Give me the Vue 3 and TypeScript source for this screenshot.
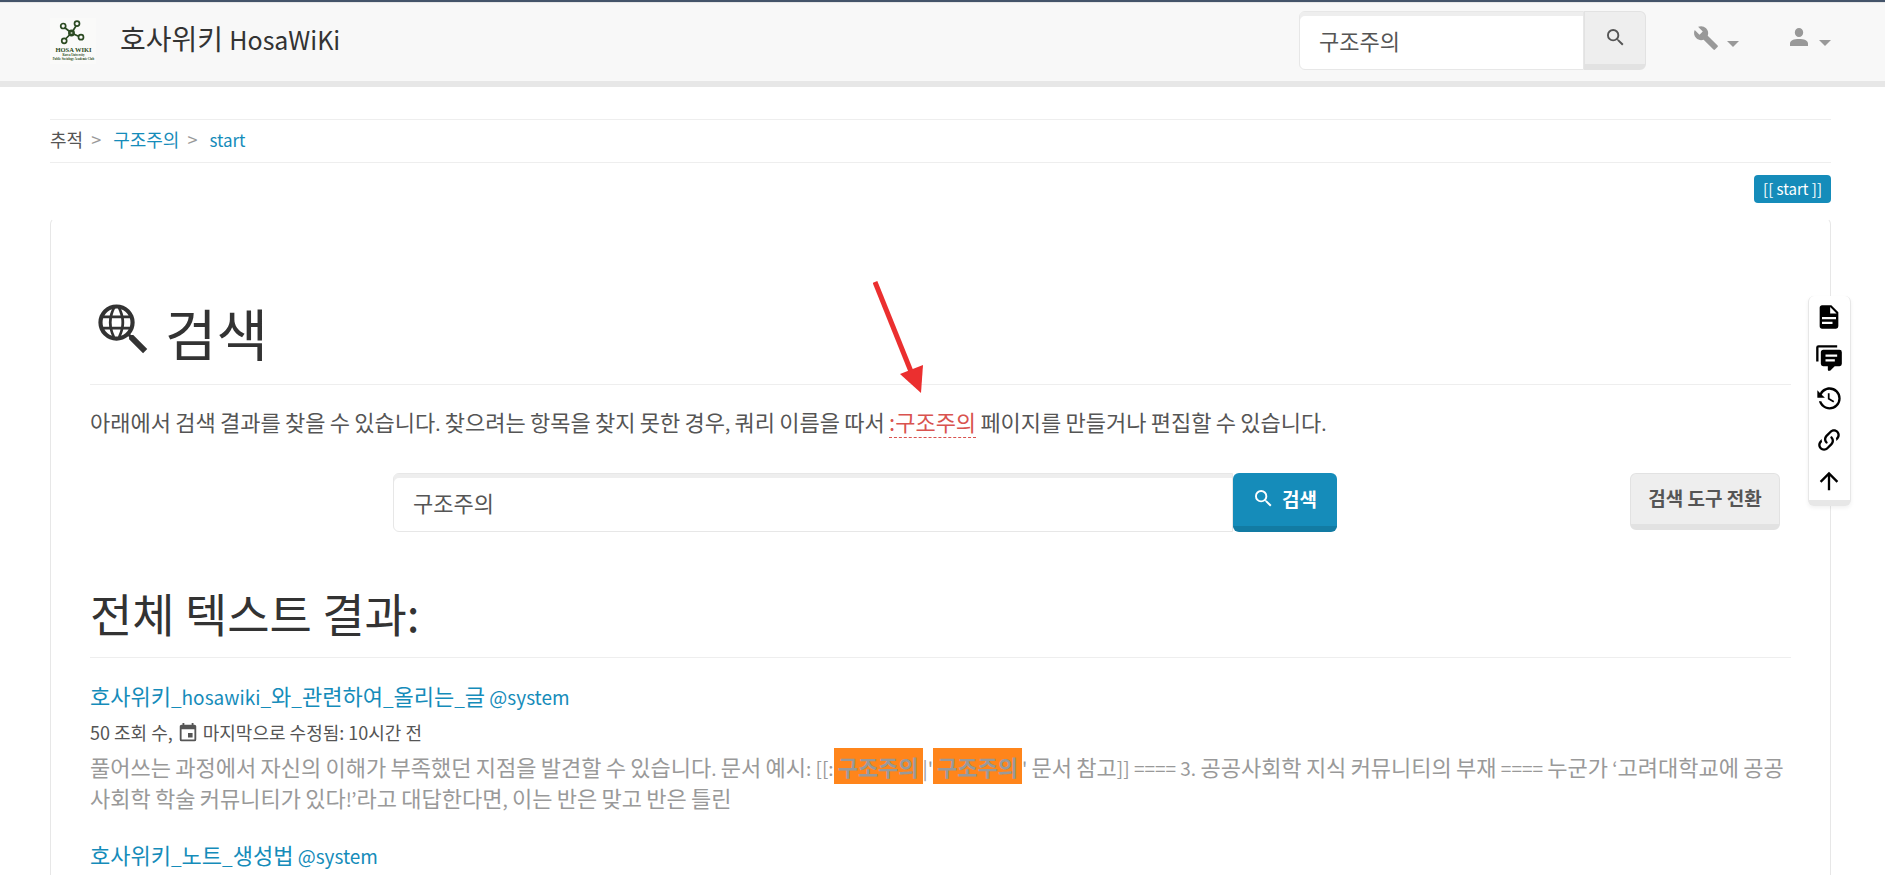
<script setup lang="ts">
import { ref } from 'vue'

interface Run {
  text: string
  latin: boolean
  hit: boolean
}

function split(text: string, hit = false): Run[] {
  return (text.match(/[가-힣]+|[^가-힣]+/g) ?? []).map((part) => ({
    text: part,
    latin: !/[가-힣]/.test(part),
    hit,
  }))
}

/* Matches of the query are wrapped in asterisks. */
function highlight(text: string): Run[] {
  return text.split('*').flatMap((part, i) => split(part, i % 2 === 1))
}

const headerQuery = ref('구조주의')
const pageQuery = ref('구조주의')

const introBefore = split(
  '아래에서 검색 결과를 찾을 수 있습니다. 찾으려는 항목을 찾지 못한 경우, 쿼리 이름을 따서 ',
)
const introAfter = split(' 페이지를 만들거나 편집할 수 있습니다.')

const firstTitle = split('호사위키_hosawiki_와_관련하여_올리는_글 @system')
const secondTitle = split('호사위키_노트_생성법 @system')
const snippet = highlight(
  "풀어쓰는 과정에서 자신의 이해가 부족했던 지점을 발견할 수 있습니다. 문서 예시: [[:*구조주의*|'*구조주의*' 문서 참고]] ==== 3. 공공사회학 지식 커뮤니티의 부재 ==== 누군가 ‘고려대학교에 공공사회학 학술 커뮤니티가 있다!’라고 대답한다면, 이는 반은 맞고 반은 틀린",
)

const magnify =
  'M9.5,3A6.5,6.5 0 0,1 16,9.5C16,11.11 15.41,12.59 14.44,13.73L14.71,14H15.5L20.5,19L19,20.5L14,15.5V14.71L13.73,14.44C12.59,15.41 11.11,16 9.5,16A6.5,6.5 0 0,1 3,9.5A6.5,6.5 0 0,1 9.5,3M9.5,5C7,5 5,7 5,9.5C5,12 7,14 9.5,14C12,14 14,12 14,9.5C14,7 12,5 9.5,5Z'

const pageTools: { label: string; path: string }[] = [
  {
    label: '문서 보기',
    path: 'M13,9H18.5L13,3.5V9M6,2H14L20,8V20A2,2 0 0,1 18,22H6C4.89,22 4,21.1 4,20V4C4,2.89 4.89,2 6,2M15,18V16H6V18H15M18,14V12H6V14H18Z',
  },
  {
    label: '토론',
    path: 'M12,23A1,1 0 0,1 11,22V19H7A2,2 0 0,1 5,17V7C5,5.89 5.9,5 7,5H21A2,2 0 0,1 23,7V17A2,2 0 0,1 21,19H16.9L13.2,22.71C13,22.89 12.76,23 12.5,23H12M3,15H1V3A2,2 0 0,1 3,1H19V3H3V15M9,9V11H19V9H9M9,13V15H17V13H9Z',
  },
  {
    label: '이전 판',
    path: 'M11,7V12.11L15.71,14.9L16.5,13.62L12.5,11.25V7M12.5,2C8.97,2 5.91,3.92 4.27,6.77L2,4.5V11H8.5L5.75,8.25C6.96,5.73 9.5,4 12.5,4A7.5,7.5 0 0,1 20,11.5A7.5,7.5 0 0,1 12.5,19C9.23,19 6.47,16.91 5.44,14H3.34C4.44,18.03 8.11,21 12.5,21C17.74,21 22,16.75 22,11.5A9.5,9.5 0 0,0 12.5,2Z',
  },
  {
    label: '역링크',
    path: 'M10.59,13.41C11,13.8 11,14.44 10.59,14.83C10.2,15.22 9.56,15.22 9.17,14.83C7.22,12.88 7.22,9.71 9.17,7.76V7.76L12.71,4.22C14.66,2.27 17.83,2.27 19.78,4.22C21.73,6.17 21.73,9.34 19.78,11.29L18.29,12.78C18.3,11.96 18.17,11.14 17.89,10.36L18.36,9.88C19.54,8.71 19.54,6.81 18.36,5.64C17.19,4.46 15.29,4.46 14.12,5.64L10.59,9.17C9.41,10.34 9.41,12.24 10.59,13.41M13.41,9.17C13.8,8.78 14.44,8.78 14.83,9.17C16.78,11.12 16.78,14.29 14.83,16.24V16.24L11.29,19.78C9.34,21.73 6.17,21.73 4.22,19.78C2.27,17.83 2.27,14.66 4.22,12.71L5.71,11.22C5.7,12.04 5.83,12.86 6.11,13.65L5.64,14.12C4.46,15.29 4.46,17.19 5.64,18.36C6.81,19.54 8.71,19.54 9.88,18.36L13.41,14.83C14.59,13.66 14.59,11.76 13.41,10.59C13,10.2 13,9.56 13.41,9.17Z',
  },
  {
    label: '맨 위로',
    path: 'M13,20H11V8L5.5,13.5L4.08,12.08L12,4.16L19.92,12.08L18.5,13.5L13,8V20Z',
  },
]
</script>

<template>
  <div class="page">
    <header class="navbar">
      <a class="brand" href="#">
        <svg class="logo" viewBox="0 0 46 46" role="img" aria-label="HOSA WIKI">
          <rect width="46" height="46" fill="#fafaf9" />
          <g fill="none" stroke="#2b4a22" stroke-width="1.7">
            <path d="M14.5 9.5 L21.5 15 L26 8 M21.5 15 L28.5 18.2 M21.5 15 L15.5 21" />
            <circle cx="13.2" cy="8" r="2.5" />
            <circle cx="27" cy="5.6" r="2.5" />
            <circle cx="31" cy="19.2" r="2.5" />
            <circle cx="14.2" cy="22.8" r="2.5" />
            <circle cx="21.5" cy="15" r="2.6" fill="#2b4a22" />
          </g>
          <circle cx="21.5" cy="15" r="1" fill="#b7c4b2" />
          <g fill="#2b4a22" text-anchor="middle" font-family="'Liberation Serif', serif" font-weight="bold">
            <text x="23.5" y="34" font-size="6.5">HOSA WIKI</text>
            <text x="23.5" y="38.4" font-size="3">Korea University</text>
            <text x="23.5" y="41.6" font-size="3">Public Sociology Academic Club</text>
          </g>
        </svg>
        <span class="brand-name">호사위키 <span class="latin">HosaWiKi</span></span>
      </a>

      <div class="nav-right">
        <form class="nav-search" role="search" @submit.prevent>
          <input v-model="headerQuery" class="field" type="text" aria-label="위키 검색" />
          <button class="btn-default nav-search-btn" type="submit" aria-label="검색">
            <svg class="icon-search" viewBox="3 3 18 18"><path :d="magnify" /></svg>
          </button>
        </form>
        <button class="menu" type="button" aria-label="도구">
          <svg class="icon-menu" viewBox="0 0 24 24">
            <path d="M22.7,19L13.6,9.9C14.5,7.6 14,4.9 12.1,3C10.1,1 7.1,0.6 4.7,1.7L9,6L6,9L1.6,4.7C0.4,7.1 0.9,10.1 2.9,12.1C4.8,14 7.5,14.5 9.8,13.6L18.9,22.7C19.3,23.1 19.9,23.1 20.3,22.7L22.6,20.4C23.1,20 23.1,19.3 22.7,19Z" />
          </svg>
          <span class="caret"></span>
        </button>
        <button class="menu menu-user" type="button" aria-label="사용자">
          <svg class="icon-menu" viewBox="0 0 24 24">
            <path d="M12,3A4.2,4.5 0 0,1 16.2,7.5A4.2,4.5 0 0,1 12,12A4.2,4.5 0 0,1 7.8,7.5A4.2,4.5 0 0,1 12,3M12,14C17,14 21,15.4 21,18.6V21H3V18.6C3,15.4 7,14 12,14Z" />
          </svg>
          <span class="caret"></span>
        </button>
      </div>
    </header>

    <main class="content">
      <nav class="trail" aria-label="추적">
        <span>추적</span><span class="sep">&gt;</span>
        <a href="#">구조주의</a><span class="sep">&gt;</span>
        <a class="latin" href="#">start</a>
      </nav>

      <div class="page-id"><span class="badge">[[ start ]]</span></div>

      <article class="panel">
        <h1>
          <svg class="icon-web" viewBox="0 0 24 24">
            <path d="M15.5,14L20.5,19L19,20.5L14,15.5V14.71L13.73,14.43C12.59,15.41 11.11,16 9.5,16A6.5,6.5 0 0,1 3,9.5A6.5,6.5 0 0,1 9.5,3A6.5,6.5 0 0,1 16,9.5C16,11.11 15.41,12.59 14.43,13.73L14.71,14H15.5M9.5,4.5L8.95,4.53C8.71,5.05 8.34,5.93 8.07,7H10.93C10.66,5.93 10.29,5.05 10.05,4.53C9.87,4.5 9.69,4.5 9.5,4.5M13.83,7C13.24,5.97 12.29,5.17 11.15,4.78C11.39,5.31 11.7,6.08 11.93,7H13.83M5.17,7H7.07C7.3,6.08 7.61,5.31 7.85,4.78C6.71,5.17 5.76,5.97 5.17,7M4.5,9.5C4.5,10 4.58,10.53 4.73,11H6.87L6.75,9.5L6.87,8H4.73C4.58,8.47 4.5,9 4.5,9.5M14.27,11C14.42,10.53 14.5,10 14.5,9.5C14.5,9 14.42,8.47 14.27,8H12.13C12.21,8.5 12.25,9 12.25,9.5C12.25,10 12.21,10.5 12.13,11H14.27M7.87,8L7.75,9.5L7.87,11H11.13C11.21,10.5 11.25,10 11.25,9.5C11.25,9 11.21,8.5 11.13,8H7.87M9.5,14.5C9.68,14.5 9.86,14.5 10.03,14.47C10.28,13.95 10.66,13.07 10.93,12H8.07C8.34,13.07 8.72,13.95 8.97,14.47L9.5,14.5M13.83,12H11.93C11.7,12.92 11.39,13.69 11.15,14.22C12.29,13.83 13.24,13.03 13.83,12M5.17,12C5.76,13.03 6.71,13.83 7.85,14.22C7.61,13.69 7.3,12.92 7.07,12H5.17Z" />
          </svg>
          <span>검색</span>
        </h1>

        <p class="intro">
          <span v-for="(run, i) in introBefore" :key="i" :class="{ latin: run.latin }">{{ run.text }}</span>
          <span class="pointed"><a class="missing" href="#">:구조주의</a><svg class="pointer" viewBox="0 0 52 114" aria-hidden="true">
            <path d="M2 2 L39 94" stroke="#eb2f2f" stroke-width="5" fill="none" />
            <path d="M27 94 L50 85 L48 113 Z" fill="#eb2f2f" />
          </svg></span>
          <span v-for="(run, i) in introAfter" :key="i" :class="{ latin: run.latin }">{{ run.text }}</span>
        </p>

        <div class="search-row">
          <form class="main-search" @submit.prevent>
            <input v-model="pageQuery" class="field" type="text" aria-label="검색어" />
            <button class="btn-primary" type="submit">
              <svg class="icon-search" viewBox="3 3 18 18"><path :d="magnify" /></svg>
              <span>검색</span>
            </button>
          </form>
          <div class="toggle-cell">
            <button class="btn-default toggle" type="button">검색 도구 전환</button>
          </div>
        </div>

        <h2>전체 텍스트 결과:</h2>

        <dl class="results">
          <dt>
            <a href="#"><span v-for="(run, i) in firstTitle" :key="i" :class="{ latin: run.latin }">{{ run.text }}</span></a>
          </dt>
          <dd class="meta">
            <span>50 조회 수,</span>
            <svg class="icon-date" viewBox="0 0 24 24">
              <path d="M19,19H5V8H19M16,1V3H8V1H6V3H5C3.89,3 3,3.89 3,5V19A2,2 0 0,0 5,21H19A2,2 0 0,0 21,19V5C21,3.89 20.1,3 19,3H18V1M17,12H12V17H17V12Z" />
            </svg>
            <span>마지막으로 수정됨: 10시간 전</span>
          </dd>
          <dd class="snippet">
            <component
              :is="run.hit ? 'mark' : 'span'"
              v-for="(run, i) in snippet"
              :key="i"
              :class="{ latin: run.latin }"
              >{{ run.text }}</component
            >
          </dd>
          <dt>
            <a href="#"><span v-for="(run, i) in secondTitle" :key="i" :class="{ latin: run.latin }">{{ run.text }}</span></a>
          </dt>
        </dl>
      </article>
    </main>

    <nav class="tools" aria-label="문서 도구">
      <a v-for="tool in pageTools" :key="tool.label" href="#" :aria-label="tool.label">
        <svg viewBox="0 0 24 24"><path :d="tool.path" /></svg>
      </a>
    </nav>
  </div>
</template>

<style>
html,
body {
  margin: 0;
  background: #fff;
}
</style>

<style scoped>
.page,
.page * {
  box-sizing: border-box;
}
.page {
  display: flex;
  flex-direction: column;
  min-height: 100vh;
  font-family: 'Noto Sans CJK KR', sans-serif;
  font-size: 22px;
  line-height: 31px;
  color: #555;
  border-top: 2px solid #44546a;
}
a {
  color: #158cba;
  text-decoration: none;
}
button,
input {
  font-family: inherit;
  margin: 0;
}
svg {
  display: block;
  fill: currentColor;
}
.latin {
  font-size: 19px;
  line-height: 1;
}

/* Header */
.navbar {
  display: flex;
  justify-content: space-between;
  min-height: 85px;
  padding: 0 54px 0 50px;
  background: #f8f8f8;
  border-top: 1px solid #e7e7e7;
  border-bottom: 6px solid #e7e7e7;
}
.brand {
  display: flex;
  align-items: center;
  gap: 24px;
  height: 76px;
}
.logo {
  width: 46px;
  height: 46px;
}
.brand-name {
  padding-bottom: 6px;
  font-size: 28px;
  color: #333;
}
.brand-name .latin {
  font-size: 25px;
}
.nav-right {
  display: flex;
  align-items: flex-start;
  padding-top: 8px;
}
.nav-search {
  display: flex;
  width: 347px;
  margin-right: 47px;
}
.field {
  flex: 1;
  min-width: 0;
  height: 59px;
  padding: 0 19px 1px;
  font-size: 22px;
  color: #555;
  background: #fff;
  border: 1px solid #e7e7e7;
  border-radius: 6px 0 0 6px;
  box-shadow: inset 0 4px 0 #eee;
}
.btn-default {
  color: #555;
  background: #eee;
  border: 1px solid #e2e2e2;
  border-bottom-width: 6px;
  border-radius: 6px;
}
.nav-search-btn {
  display: flex;
  justify-content: center;
  width: 62px;
  height: 59px;
  padding: 17px 0 0;
  border-radius: 0 6px 6px 0;
}
.icon-search {
  width: 17px;
  height: 17px;
}
.menu {
  display: flex;
  align-items: center;
  gap: 8px;
  padding: 14px 0 0;
  color: #999;
  background: none;
  border: 0;
}
.menu-user {
  margin-left: 48px;
}
.icon-menu {
  width: 26px;
  height: 26px;
}
.menu-user .icon-menu {
  width: 24px;
  height: 24px;
}
.caret {
  margin-top: 12px;
  border: 6px solid transparent;
  border-top-color: #999;
  border-bottom: 0;
}

/* Breadcrumb trail and page id */
.content {
  flex: 1;
  display: flex;
  flex-direction: column;
  padding: 32px 54px 0 50px;
}
.trail {
  display: flex;
  align-items: center;
  height: 44px;
  padding-bottom: 3px;
  font-size: 18px;
  border-top: 1px solid #eee;
  border-bottom: 1px solid #eee;
}
.sep {
  margin: 0 12px 0 8px;
  color: #999;
}
.trail .latin {
  font-size: 17px;
}
.page-id {
  display: flex;
  justify-content: flex-end;
  padding-top: 12px;
}
.badge {
  padding: 0 9px;
  font-size: 15px;
  line-height: 28px;
  color: #fff;
  background: #158cba;
  border-radius: 4px;
}

/* Main panel */
.panel {
  flex: 1;
  margin-top: 15px;
  padding: 77px 39px 0;
  border: 1px solid #e7e7e7;
  border-top-color: transparent;
  border-bottom: 0;
  border-radius: 6px 6px 0 0;
}
h1,
h2 {
  margin: 0;
  font-weight: 400;
  color: #333;
  border-bottom: 1px solid #eee;
}
h1 {
  display: flex;
  gap: 8px;
  height: 89px;
  font-size: 56px;
  line-height: 72px;
}
.icon-web {
  width: 67px;
  height: 67px;
}
.intro {
  margin: 21px 0 36px;
}
.pointed {
  position: relative;
  display: inline-block;
}
.missing {
  color: #d9534f;
  border-bottom: 1px dashed #d9534f;
}
.pointer {
  position: absolute;
  right: 51px;
  bottom: 43px;
  width: 52px;
  height: 114px;
}
.search-row {
  display: grid;
  grid-template-columns: 303fr 944fr 454fr;
  align-items: start;
}
.main-search {
  grid-column: 2;
  display: flex;
}
.btn-primary {
  display: flex;
  align-items: center;
  gap: 10px;
  height: 59px;
  padding: 0 20px 3px 22px;
  font-size: 19px;
  font-weight: 700;
  color: #fff;
  background: #158cba;
  border: 0;
  border-bottom: 6px solid #127ba3;
  border-radius: 6px;
}
.toggle-cell {
  display: flex;
  justify-content: flex-end;
  padding-right: 11px;
}
.toggle {
  width: 150px;
  height: 57px;
  padding: 0 0 3px;
  font-size: 19px;
  font-weight: 700;
}
h2 {
  margin-top: 47px;
  height: 79px;
  font-size: 46px;
  line-height: 66px;
}

/* Results */
.results {
  margin: 22px 0 0;
}
dd {
  margin: 0;
}
.meta {
  display: flex;
  align-items: center;
  gap: 4px;
  padding-top: 6px;
  font-size: 18px;
}
.icon-date {
  width: 22px;
  height: 22px;
}
.snippet {
  margin-bottom: 26px;
  padding-top: 3px;
  color: #999;
}
mark {
  padding: 2px 4px;
  font-weight: 700;
  color: #999;
  background: #ff851b;
}

/* Floating page tools */
.tools {
  position: fixed;
  top: 296px;
  right: 34px;
  display: flex;
  flex-direction: column;
  gap: 13px;
  padding: 7px 7px 5px 6px;
  background: #fff;
  border: 1px solid #e7e7e7;
  border-top: 0;
  border-bottom-width: 6px;
  border-radius: 6px;
  box-shadow: 0 2px 4px rgba(0, 0, 0, 0.06);
}
.tools a {
  color: #000;
}
.tools svg {
  width: 28px;
  height: 28px;
}
</style>
